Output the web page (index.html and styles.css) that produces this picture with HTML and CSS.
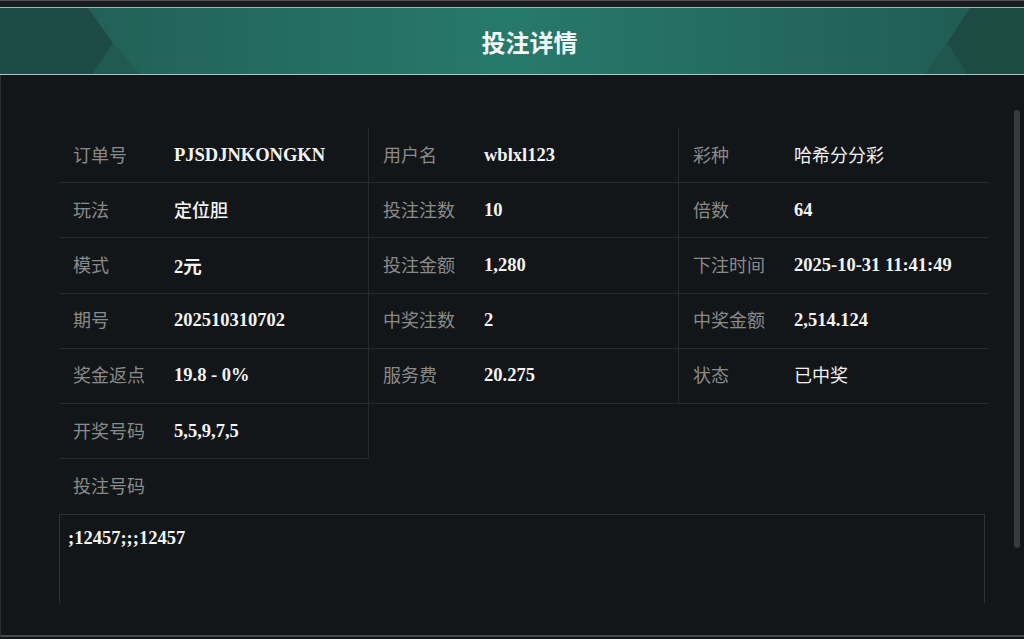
FILE: index.html
```html
<!DOCTYPE html>
<html lang="zh-CN">
<head>
<meta charset="utf-8">
<title>投注详情</title>
<link rel="stylesheet" href="styles.css">
</head>
<body>
<div class="page">
  <div class="topstrip"></div>
  <header class="header">
    <svg class="deco" viewBox="0 0 1024 66" preserveAspectRatio="none" aria-hidden="true">
      <polygon points="0,0 88,0 113,35 93,66 0,66" fill="#1e4b45"/>
      <polygon points="113,35 140,66 93,66" fill="#215a51"/>
      <polygon points="1024,0 970,0 947,35 967,66 1024,66" fill="#1d4a43"/>
      <polygon points="947,35 925,66 967,66" fill="#20564d"/>
    </svg>
    <h1 class="title">投注详情</h1>
  </header>
  <main class="body">
    <div class="scroll">
      <div class="grid">
        <div class="cell sep"><span class="label">订单号</span><span class="value">PJSDJNKONGKN</span></div>
        <div class="cell sep"><span class="label">用户名</span><span class="value">wblxl123</span></div>
        <div class="cell"><span class="label">彩种</span><span class="value cn">哈希分分彩</span></div>

        <div class="cell sep"><span class="label">玩法</span><span class="value cnb">定位胆</span></div>
        <div class="cell sep"><span class="label">投注注数</span><span class="value">10</span></div>
        <div class="cell"><span class="label">倍数</span><span class="value">64</span></div>

        <div class="cell sep"><span class="label">模式</span><span class="value">2元</span></div>
        <div class="cell sep"><span class="label">投注金额</span><span class="value">1,280</span></div>
        <div class="cell"><span class="label">下注时间</span><span class="value">2025-10-31 11:41:49</span></div>

        <div class="cell sep"><span class="label">期号</span><span class="value">202510310702</span></div>
        <div class="cell sep"><span class="label">中奖注数</span><span class="value">2</span></div>
        <div class="cell"><span class="label">中奖金额</span><span class="value">2,514.124</span></div>

        <div class="cell sep"><span class="label">奖金返点</span><span class="value">19.8 - 0%</span></div>
        <div class="cell sep"><span class="label">服务费</span><span class="value">20.275</span></div>
        <div class="cell"><span class="label">状态</span><span class="value cn">已中奖</span></div>

        <div class="cell sep"><span class="label">开奖号码</span><span class="value">5,5,9,7,5</span></div>
      </div>
      <div class="numbers-label"><span class="label">投注号码</span></div>
      <div class="numbers-box">;12457;;;12457</div>
    </div>
    <div class="scrollbar"></div>
  </main>
</div>
</body>
</html>
```
FILE: styles.css
```css
html, body {
  margin: 0;
  padding: 0;
  background: #131619;
}
.page {
  width: 1024px;
  height: 639px;
  overflow: hidden;
  font-family: "Noto Sans CJK SC", "Noto Sans", sans-serif;
}
.topstrip {
  height: 6px;
  background: #1a1c1f;
  border-top: 1px solid #4e5154;
}
.header {
  position: relative;
  height: 66px;
  border-top: 1px solid #94b9b1;
  border-bottom: 1px solid #a6c8c1;
  background: linear-gradient(90deg, #215c53 0%, #23665b 18%, #277a6b 50%, #24695e 75%, #1f5a51 100%);
  display: flex;
  align-items: center;
  justify-content: center;
  padding-left: 35px;
}
.deco {
  position: absolute;
  left: 0;
  top: 0;
  width: 100%;
  height: 100%;
}
.title {
  position: relative;
  margin: 0;
  font-size: 24px;
  font-weight: 700;
  color: #f4f7f6;
}
.body {
  position: relative;
  height: 560px;
  border-left: 1px solid #2c2f32;
  border-bottom: 2px solid #45484b;
  background: #131619;
}
.scroll {
  height: 528px;
  overflow: hidden;
  padding: 53px 0 0 58px;
  box-sizing: border-box;
}
.grid {
  display: grid;
  grid-template-columns: 310px 310px 310px;
  width: 930px;
}
.cell {
  height: 54.2px;
  border-bottom: 1px solid #272a2d;
  display: flex;
  align-items: center;
  padding-left: 14px;
}
.cell.sep {
  border-right: 1px solid #272a2d;
}
.label {
  width: 101px;
  flex: none;
  font-size: 18px;
  line-height: 24px;
  margin-bottom: 3px;
  color: #8a8a88;
}
.value {
  font-family: "Liberation Serif", "Noto Sans CJK SC", serif;
  font-weight: 700;
  font-size: 18.5px;
  color: #f4f4f4;
  white-space: nowrap;
}
.value.cn {
  font-family: "Noto Sans CJK SC", sans-serif;
  font-weight: 400;
  font-size: 18px;
  line-height: 24px;
  margin-bottom: 3px;
  color: #f0f0f0;
}
.value.cnb {
  font-family: "Noto Sans CJK SC", sans-serif;
  font-weight: 500;
  font-size: 18px;
  line-height: 24px;
  margin-bottom: 3px;
}
.numbers-label {
  height: 55px;
  display: flex;
  align-items: center;
  padding-left: 14px;
}
.numbers-box {
  width: 926px;
  height: 140px;
  box-sizing: border-box;
  border: 1px solid #2e3134;
  padding: 11px 8px;
  font-family: "Liberation Serif", serif;
  font-weight: 700;
  font-size: 18.5px;
  line-height: 24px;
  color: #f4f4f4;
}
.scrollbar {
  position: absolute;
  left: 1013px;
  top: 35px;
  width: 6px;
  height: 438px;
  border-radius: 3px;
  background: #3a3b3d;
}
```
